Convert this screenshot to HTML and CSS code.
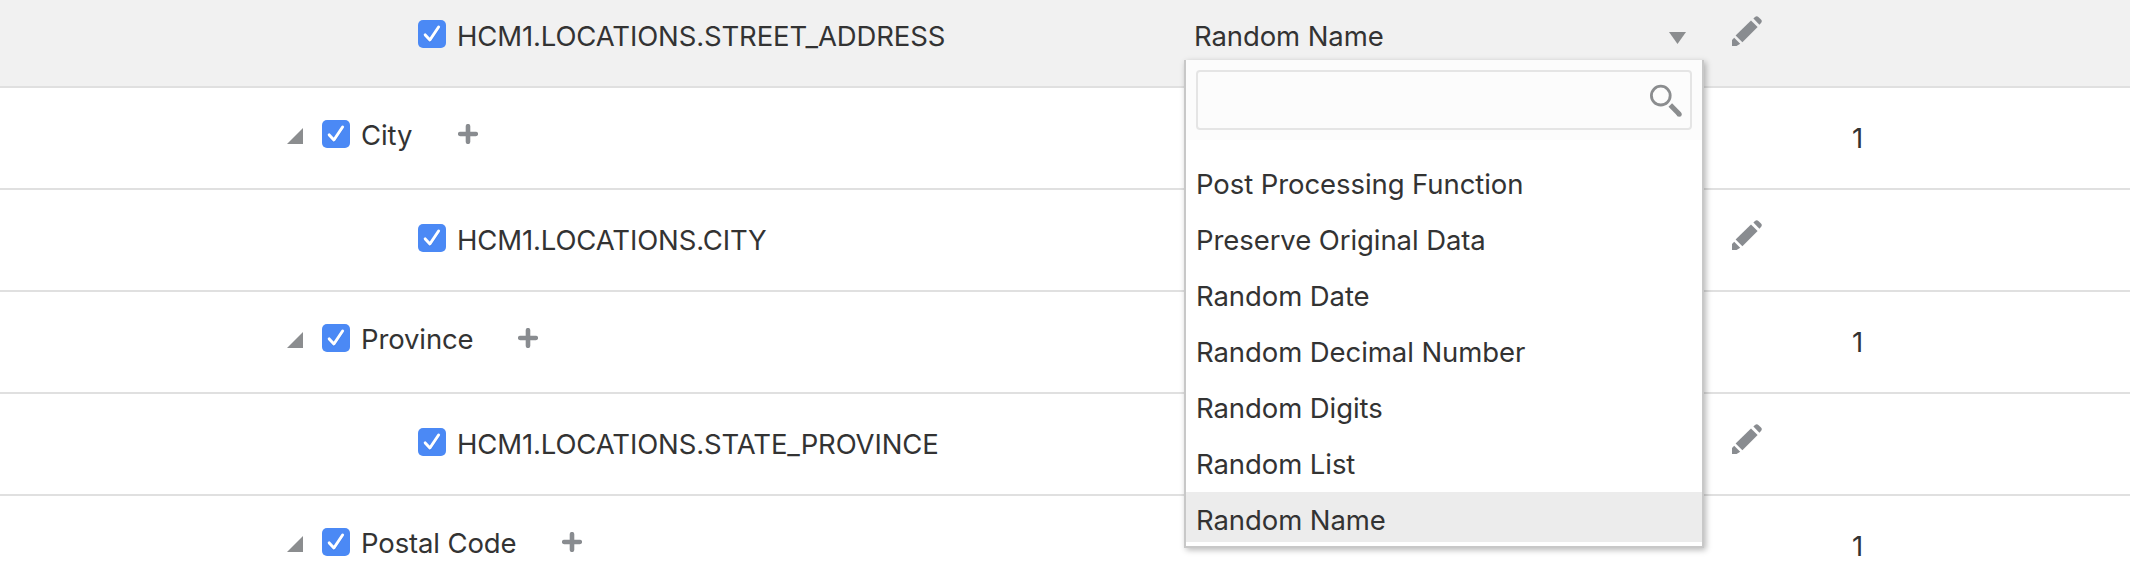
FILE: index.html
```html
<!DOCTYPE html>
<html lang="en">
<head>
<meta charset="utf-8">
<title>Masking Formats</title>
<link rel="stylesheet" href="styles.css">
</head>
<body>
<svg class="defs" width="0" height="0">
  <symbol id="check" viewBox="0 0 28 28"><path d="M7.2 15.7l4.7 5.1L20.6 7.6" fill="none" stroke="#1f5fd0" stroke-opacity=".35" stroke-width="3" stroke-linecap="round" stroke-linejoin="round"/><path d="M7.2 14.9l4.7 5.1L20.6 7" fill="none" stroke="#fff" stroke-width="3" stroke-linecap="round" stroke-linejoin="round"/></symbol>
  <symbol id="plus" viewBox="0 0 20 20"><path d="M10 2.2v15.6M2.2 10h15.6" stroke="#898c90" stroke-width="4.6" stroke-linecap="round"/></symbol>
  <symbol id="pencil" viewBox="0 0 30 30"><g fill="#898c90"><path d="M19 4.4l6.6 6.6L10.4 26.2 3.6 19.6z"/><path d="M21.4 2.6L23 1q1.7-1.6 3.4 0l2.6 2.6q1.6 1.7 0 3.4l-1.6 1.7z"/><path d="M2.2 21.8l6 6L4.6 30H0v-6z"/></g></symbol>
</svg>
<main class="tree">
  <div class="row active">
    <div class="name child"><span class="box"><svg><use href="#check"/></svg></span><span class="text">HCM1.LOCATIONS.STREET_ADDRESS</span></div>
    <div class="format">
      <div class="select"><span class="value">Random Name</span><svg class="arrow" viewBox="0 0 17 12"><path d="M0 0h17L8.5 12z" fill="#8b8d8f"/></svg></div>
      <div class="menu">
        <div class="search"><div class="field"><svg class="glass" viewBox="0 0 34 34"><circle cx="11.8" cy="11.6" r="9.4" fill="none" stroke="#8b8d8f" stroke-width="2.8"/><path d="M21.3 21.1l8.8 9" stroke="#8b8d8f" stroke-width="5"/><circle cx="30.2" cy="30.2" r="2.5" fill="#8b8d8f"/></svg></div></div>
        <ul class="options">
          <li>Post Processing Function</li>
          <li>Preserve Original Data</li>
          <li>Random Date</li>
          <li>Random Decimal Number</li>
          <li>Random Digits</li>
          <li>Random List</li>
          <li class="selected">Random Name</li>
        </ul>
      </div>
    </div>
    <svg class="pencil"><use href="#pencil"/></svg>
  </div>
  <div class="row">
    <div class="name group"><svg class="twisty" viewBox="0 0 16 16"><path d="M16 0v16H0z" fill="#8b8d8f"/></svg><span class="box"><svg><use href="#check"/></svg></span><span class="text city">City</span><svg class="plus"><use href="#plus"/></svg></div>
    <span class="count">1</span>
  </div>
  <div class="row">
    <div class="name child"><span class="box"><svg><use href="#check"/></svg></span><span class="text">HCM1.LOCATIONS.CITY</span></div>
    <div class="format"></div>
    <svg class="pencil"><use href="#pencil"/></svg>
  </div>
  <div class="row">
    <div class="name group"><svg class="twisty" viewBox="0 0 16 16"><path d="M16 0v16H0z" fill="#8b8d8f"/></svg><span class="box"><svg><use href="#check"/></svg></span><span class="text province">Province</span><svg class="plus"><use href="#plus"/></svg></div>
    <span class="count">1</span>
  </div>
  <div class="row">
    <div class="name child"><span class="box"><svg><use href="#check"/></svg></span><span class="text">HCM1.LOCATIONS.STATE_PROVINCE</span></div>
    <div class="format"></div>
    <svg class="pencil"><use href="#pencil"/></svg>
  </div>
  <div class="row">
    <div class="name group"><svg class="twisty" viewBox="0 0 16 16"><path d="M16 0v16H0z" fill="#8b8d8f"/></svg><span class="box"><svg><use href="#check"/></svg></span><span class="text postal">Postal Code</span><svg class="plus"><use href="#plus"/></svg></div>
    <span class="count">1</span>
  </div>
</main>
</body>
</html>
```

FILE: styles.css
```css
* { box-sizing: border-box; }
body { margin: 0; background: #fff; color: #333; font: 27.5px/34px Inter, "Liberation Sans", sans-serif; }
svg { display: block; flex: none; }
.defs { position: absolute; }
.tree { height: 566px; overflow: hidden; }
.row { display: flex; align-items: flex-start; height: 102px; border-bottom: 2px solid #e0e0e0; }
.row.active { height: 88px; background: #f1f1f1; }
.name { display: flex; width: 1184px; flex: none; white-space: nowrap; }
.child { padding: 34px 0 0 418px; }
.group { padding: 32px 0 0 287px; }
.active .child { padding-top: 20px; }
.box { flex: none; width: 28px; height: 28px; border-radius: 5px; background: #4b89f5; }
.box svg { width: 28px; height: 28px; }
.text { margin: -1px 0 0 11px; letter-spacing: -0.13px; }
.group .text { margin-top: -2px; }
.twisty { width: 16px; height: 16px; margin: 8px 19px 0 0; }
.plus { width: 20px; height: 20px; margin-top: 4px; }
.city { width: 97px; }
.province { width: 157px; }
.postal { width: 201px; }
.format { position: relative; width: 520px; flex: none; }
.select { display: flex; justify-content: space-between; padding: 19px 18px 0 10px; letter-spacing: -0.1px; }
.arrow { width: 17px; height: 12px; margin-top: 13px; }
.pencil { width: 30px; height: 30px; margin: 30px 0 0 28px; }
.active .pencil { margin-top: 16px; }
.count { margin: 33px 0 0 668px; }
.menu { position: absolute; z-index: 2; top: 60px; left: 0; width: 520px; height: 488px; background: #fff; border: solid #c8c8c8; border-width: 0 2px 2px; box-shadow: 2px 2px 6px rgba(0,0,0,.28); letter-spacing: -0.08px; }
.search { height: 80px; padding: 10px; background: #fcfcfc; }
.field { display: flex; justify-content: flex-end; height: 60px; padding: 12px 7px 0 0; border: 2px solid #e5e5e5; border-radius: 4px; }
.glass { width: 34px; height: 34px; }
.options { list-style: none; margin: 0; padding: 16px 0 0; height: 402px; overflow: hidden; }
.options li { height: 56px; padding: 11px 0 0 10px; white-space: nowrap; }
.options .selected { background: #ececec; }
```
